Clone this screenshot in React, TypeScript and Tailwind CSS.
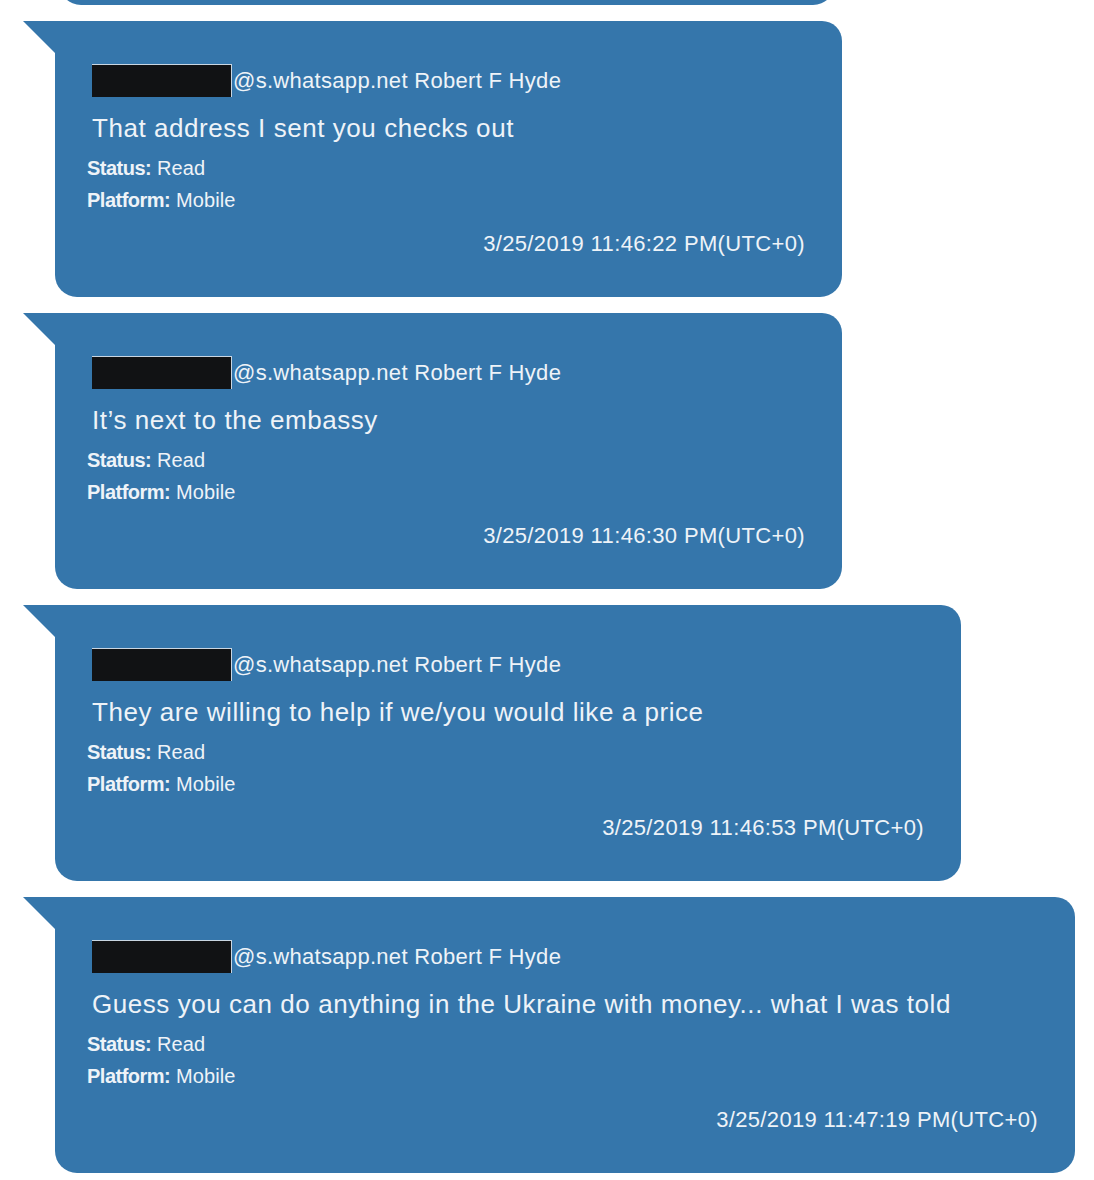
import React from "react";

type Msg = { text: string; time: string; width: string };

const msgs: Msg[] = [
  { text: "That address I sent you checks out", time: "3/25/2019 11:46:22 PM(UTC+0)", width: "w-[787px]" },
  { text: "It\u2019s next to the embassy", time: "3/25/2019 11:46:30 PM(UTC+0)", width: "w-[787px]" },
  { text: "They are willing to help if we/you would like a price", time: "3/25/2019 11:46:53 PM(UTC+0)", width: "w-[906px]" },
  { text: "Guess you can do anything in the Ukraine with money... what I was told", time: "3/25/2019 11:47:19 PM(UTC+0)", width: "w-[1020px]" },
];

function Bubble({ m }: { m: Msg }) {
  return (
    <div className="flex items-start">
      <div className="w-[32px] h-[32px] bg-[#3576ab] [clip-path:polygon(0_0,100%_0,100%_100%)]" />
      <div
        className={`${m.width} h-[276px] bg-[#3576ab] rounded-tr-[20px] rounded-b-[22px] text-[#eef3f8] pl-[37px] pr-[37px] pt-[43px] flex flex-col`}
      >
        <div className="flex items-center h-[33px]">
          <div className="w-[140px] h-[33px] bg-[#111214] border-t border-r border-[#c9d6e2]" />
          <span className="text-[22px] leading-[26px] tracking-[0.3px] ml-[1px]">@s.whatsapp.net Robert F Hyde</span>
        </div>
        <div className="mt-[16px] text-[26px] leading-[30px] tracking-[0.55px]">{m.text}</div>
        <div className="mt-[9px] -ml-[5px] text-[20px] leading-[32px] tracking-[0.1px]">
          <div>
            <span className="font-bold tracking-[-0.5px]">Status:</span> Read
          </div>
          <div>
            <span className="font-bold tracking-[-0.5px]">Platform:</span> Mobile
          </div>
        </div>
        <div className="mt-[15px] text-right text-[22px] leading-[26px] tracking-[0.35px]">{m.time}</div>
      </div>
    </div>
  );
}

export default function App() {
  return (
    <div className="min-h-[1180px] w-[1094px] bg-white pl-[23px] [font-family:'Liberation_Sans',Arial,sans-serif]">
      <div className="h-[5px] overflow-hidden flex flex-col justify-end">
        <div className="ml-[36px] w-[776px] h-[40px] shrink-0 bg-[#3576ab] rounded-b-[22px]" />
      </div>
      <div className="flex flex-col gap-[16px] pt-[16px]">
        {msgs.map((m, i) => (
          <Bubble key={i} m={m} />
        ))}
      </div>
    </div>
  );
}
